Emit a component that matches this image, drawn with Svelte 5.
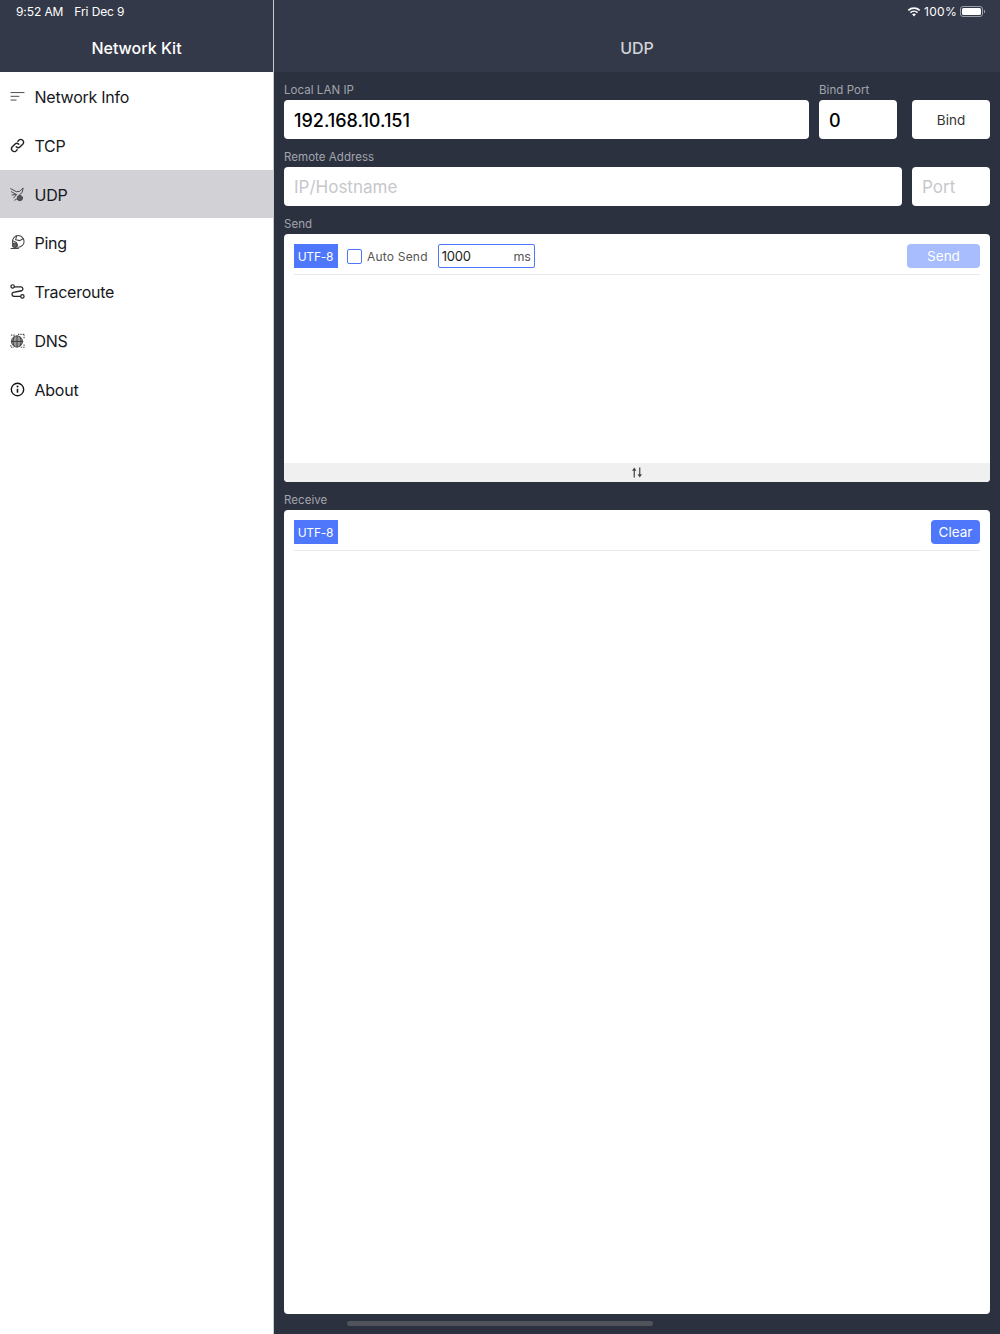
<script lang="ts">
	const menu = [
		{ id: 'info', label: 'Network Info' },
		{ id: 'tcp', label: 'TCP' },
		{ id: 'udp', label: 'UDP' },
		{ id: 'ping', label: 'Ping' },
		{ id: 'trace', label: 'Traceroute' },
		{ id: 'dns', label: 'DNS' },
		{ id: 'about', label: 'About' }
	];
	let active = $state('udp');
</script>

{#snippet icon(id: string)}
	<svg class="icon" viewBox="0 0 16 16" fill="none" stroke="#222" stroke-width="1.2" stroke-linecap="round" aria-hidden="true">
		{#if id === 'info'}
			<path d="M1 3.8h14M1 7.8h8.5M1 11.8h5.5" stroke-width="1" stroke="#444" />
		{:else if id === 'tcp'}
			<path d="M6.6 9.4a3 3 0 0 0 4.2 0l3-3a3 3 0 0 0-4.2-4.2L8.4 3.4" stroke-width="1.5" />
			<path d="M9.4 6.6a3 3 0 0 0-4.2 0l-3 3a3 3 0 0 0 4.2 4.2l1.2-1.2" stroke-width="1.5" />
		{:else if id === 'udp'}
			<g stroke="#444" stroke-width="1">
				<path d="M.8 1.8l6 3.2 3.7-.5 3.5-3.5-1 4.8-3 2.5 1.5 3" />
				<path d="M1.5 5l5 3M2.2 8.5l3.8-.5M4 11.5 7 8M5 14l2-1" />
				<circle cx="10.5" cy="11.8" r="2.8" fill="#555" />
			</g>
		{:else if id === 'ping'}
			<g stroke="#444" stroke-width="1.1">
				<circle cx="8.8" cy="6.8" r="6.2" />
				<path d="M2.8 6l4.2 2 1 3-3 3M7.2 1 6 5l4.2 1 3.8-2" />
				<circle cx="5" cy="10.8" r="2.3" fill="#666" />
				<path d="M1 14.5h8" />
			</g>
		{:else if id === 'trace'}
			<circle cx="2.8" cy="2.6" r="1.8" stroke-width="1.3" />
			<circle cx="13.2" cy="13.2" r="1.8" stroke-width="1.3" />
			<path d="M5 3h6.8a2.2 2.2 0 0 1 .6 4.2L3.6 9a2.1 2.1 0 0 0 .6 4.1H11" stroke-width="1.4" />
		{:else if id === 'dns'}
			<g stroke="#555" stroke-width="1">
				<circle cx="7.5" cy="9" r="6" fill="#999" />
				<path d="M1.5 9h12M7.5 3v12M4.5 4c-1.8 3.2-1.8 6.8 0 10M10.5 4c1.8 3.2 1.8 6.8 0 10" stroke="#333" stroke-width="0.9" />
				<path d="M1 2.2h4M8.5 1.5h6.5M15 1.5v5M.8 13v2.2h3.5M11.5 15.2H15V12" stroke-dasharray="1.5 1" stroke-linecap="butt" stroke-width="1.3" />
			</g>
		{:else}
			<circle cx="8" cy="8" r="6.6" stroke="#111" stroke-width="1.5" />
			<path d="M8 7.2v4.2" stroke="#111" stroke-width="1.7" stroke-linecap="butt" />
			<circle cx="8" cy="4.9" r="1.05" fill="#111" stroke="none" />
		{/if}
	</svg>
{/snippet}

<div class="app">
	<aside class="sidebar">
		<header class="bar">
			<div class="status status-left">
				<span>9:52 AM</span>
				<span>Fri Dec 9</span>
			</div>
			<h1 class="side-title">Network Kit</h1>
		</header>
		<nav>
			{#each menu as item}
				<button class="nav-item" class:active={active === item.id} onclick={() => (active = item.id)}>
					{@render icon(item.id)}
					<span class="nav-label">{item.label}</span>
				</button>
			{/each}
		</nav>
	</aside>

	<main class="main">
		<header class="bar">
			<div class="status status-right">
				<svg class="wifi" viewBox="0 0 16 12" aria-hidden="true">
					<path d="M8 11.6l-2.2-2.4a3.2 3.2 0 0 1 4.4 0zM4.6 8 3.3 6.6a7 7 0 0 1 9.4 0L11.4 8a5 5 0 0 0-6.8 0zM2.2 5.4.8 4a10.6 10.6 0 0 1 14.4 0l-1.4 1.4a8.6 8.6 0 0 0-11.6 0z" fill="#fff" />
				</svg>
				<span class="percent">100%</span>
				<span class="battery"><span class="level"></span></span>
			</div>
			<h2 class="main-title">UDP</h2>
		</header>

		<div class="content">
			<div class="row">
				<label class="field grow">
					<span class="label">Local LAN IP</span>
					<input class="input" value="192.168.10.151" />
				</label>
				<label class="field port">
					<span class="label">Bind Port</span>
					<input class="input" value="0" />
				</label>
				<div class="field port bind-col">
					<span class="label">&nbsp;</span>
					<button class="input bind">Bind</button>
				</div>
			</div>

			<div class="row">
				<label class="field grow">
					<span class="label">Remote Address</span>
					<input class="input" placeholder="IP/Hostname" />
				</label>
				<div class="field port">
					<span class="label">&nbsp;</span>
					<input class="input" placeholder="Port" />
				</div>
			</div>

			<section class="field">
				<span class="label">Send</span>
				<div class="card send-card">
					<div class="toolbar">
						<span class="encoding">UTF-8</span>
						<label class="auto">
							<input type="checkbox" />
							<span>Auto Send</span>
						</label>
						<div class="interval">
							<span>1000</span>
							<span class="unit">ms</span>
						</div>
						<button class="action send" disabled>Send</button>
					</div>
					<div class="editor"></div>
					<div class="resizer">
						<svg viewBox="0 0 12 12" aria-hidden="true">
							<path d="M3 11.5V3M9 .5V9" fill="none" stroke="#444" stroke-width="1.3" />
							<path d="M.6 4.2 3 .6l2.4 3.6zM6.6 7.8 9 11.4l2.4-3.6z" fill="#444" />
						</svg>
					</div>
				</div>
			</section>

			<section class="field receive">
				<span class="label">Receive</span>
				<div class="card receive-card">
					<div class="toolbar">
						<span class="encoding">UTF-8</span>
						<button class="action clear">Clear</button>
					</div>
				</div>
			</section>
		</div>
	</main>

	<div class="home-indicator"></div>
</div>

<style>
	:global(body) {
		margin: 0;
		font-family: Inter, 'Liberation Sans', sans-serif;
	}

	.app {
		display: flex;
		height: 1334px;
		width: 1000px;
		overflow: hidden;
		background: #2c3140;
	}

	.bar {
		background: #333949;
		height: 72px;
		box-sizing: border-box;
		color: #fff;
	}

	.status {
		display: flex;
		gap: 11px;
		height: 24px;
		padding: 0 16px 2px;
		box-sizing: border-box;
		align-items: center;
		font-size: 12px;
	}

	.status-left {
		letter-spacing: -0.1px;
	}

	.status-right {
		justify-content: flex-end;
		gap: 3px;
		padding: 0 17px 2px 0;
	}

	.percent {
		letter-spacing: 0.3px;
	}

	.wifi {
		width: 14px;
		height: 11px;
	}

	.battery {
		position: relative;
		display: block;
		width: 23px;
		height: 11px;
		box-sizing: border-box;
		border: 1px solid #9a9da6;
		border-radius: 3px;
		padding: 1px;
	}

	.battery::after {
		content: '';
		position: absolute;
		right: -3px;
		top: 3px;
		width: 1.5px;
		height: 3px;
		background: #9a9da6;
	}

	.level {
		display: block;
		height: 100%;
		background: #fff;
		border-radius: 1.5px;
	}

	.sidebar {
		flex: 0 0 273px;
		background: #fff;
		border-right: 1px solid #c9cad0;
	}

	.side-title,
	.main-title {
		margin: 0;
		text-align: center;
		font-size: 16px;
		font-weight: 500;
		line-height: 48px;
	}

	.main-title {
		color: #d3d5da;
	}

	nav {
		display: flex;
		flex-direction: column;
	}

	.nav-item {
		display: flex;
		align-items: center;
		gap: 9.5px;
		height: 48.84px;
		padding: 0 0 0 10px;
		border: 0;
		background: #fff;
		color: #16181d;
		font: inherit;
		font-size: 16px;
		letter-spacing: -0.25px;
		text-align: left;
	}

	.nav-label {
		padding-top: 1px;
	}

	.nav-item.active {
		background: #d1d1d6;
	}

	.icon {
		width: 15px;
		height: 15px;
		flex: none;
	}

	.main {
		flex: 1;
		min-width: 0;
		display: flex;
		flex-direction: column;
	}

	.content {
		flex: 1;
		display: flex;
		flex-direction: column;
		padding: 0 10px 20px;
		min-height: 0;
	}

	.row {
		display: flex;
		gap: 10px;
	}

	.field {
		display: flex;
		flex-direction: column;
	}

	.grow {
		flex: 1;
	}

	.port {
		width: 78px;
	}

	.bind-col {
		margin-left: 5px;
	}

	.label {
		display: block;
		height: 28px;
		line-height: 36px;
		font-size: 11.5px;
		letter-spacing: 0.05px;
		color: #a2a5ae;
		white-space: nowrap;
	}

	.input {
		display: block;
		box-sizing: border-box;
		width: 100%;
		height: 39px;
		border: 0;
		outline: 0;
		border-radius: 4px;
		background: #fff;
		font: inherit;
		font-size: 18px;
		font-weight: 500;
		padding: 2px 10px 0;
		color: #000;
	}

	.input:placeholder-shown {
		padding-top: 0;
	}

	.input::placeholder {
		color: #c7c7cc;
		font-size: 17px;
		font-weight: 400;
		opacity: 1;
	}

	.bind {
		font-size: 13.5px;
		font-weight: 400;
		padding: 0;
		color: #333;
	}

	.card {
		display: flex;
		flex-direction: column;
		background: #fff;
		border-radius: 4px;
		overflow: hidden;
	}

	.send-card {
		height: 248px;
	}

	.receive {
		flex: 1;
		min-height: 0;
	}

	.receive-card {
		flex: 1;
	}

	.toolbar {
		display: flex;
		align-items: center;
		box-sizing: border-box;
		height: 41px;
		flex: none;
		margin: 0 10px 0 9.5px;
		padding: 10px 0 6px;
		border-bottom: 1px solid #e9e9eb;
	}

	.encoding {
		width: 44px;
		height: 24px;
		line-height: 25px;
		text-align: center;
		background: #4f77fb;
		color: #fff;
		font-size: 12px;
		letter-spacing: -0.2px;
	}

	.auto {
		display: flex;
		align-items: center;
		gap: 5px;
		margin-left: 9.5px;
		font-size: 12px;
		letter-spacing: 0.2px;
		color: #555;
	}

	.auto input {
		appearance: none;
		margin: 0;
		width: 15px;
		height: 15px;
		border: 1px solid #4f77fb;
		border-radius: 2px;
		background: #fff;
	}

	.interval {
		display: flex;
		justify-content: space-between;
		align-items: center;
		box-sizing: border-box;
		width: 97px;
		height: 24px;
		margin-left: 10px;
		padding: 0 3px;
		border: 1px solid #4f77fb;
		border-radius: 2px;
		font-size: 13px;
		letter-spacing: -0.2px;
		color: #222;
	}

	.unit {
		color: #555;
		font-size: 12.5px;
	}

	.action {
		margin-left: auto;
		height: 24px;
		border: 0;
		border-radius: 4px;
		color: #fff;
		font: inherit;
		font-size: 13.5px;
		padding: 0;
	}

	.send {
		width: 73px;
		background: #a7bdfd;
	}

	.clear {
		width: 49px;
		background: #4f77fb;
	}

	.editor {
		flex: 1;
	}

	.resizer {
		flex: none;
		display: flex;
		align-items: center;
		justify-content: center;
		height: 19px;
		background: #f0f0f0;
	}

	.resizer svg {
		width: 12px;
		height: 11px;
	}

	.home-indicator {
		position: fixed;
		left: 347px;
		top: 1321px;
		width: 306px;
		height: 5px;
		border-radius: 3px;
		background: #505359;
	}
</style>
